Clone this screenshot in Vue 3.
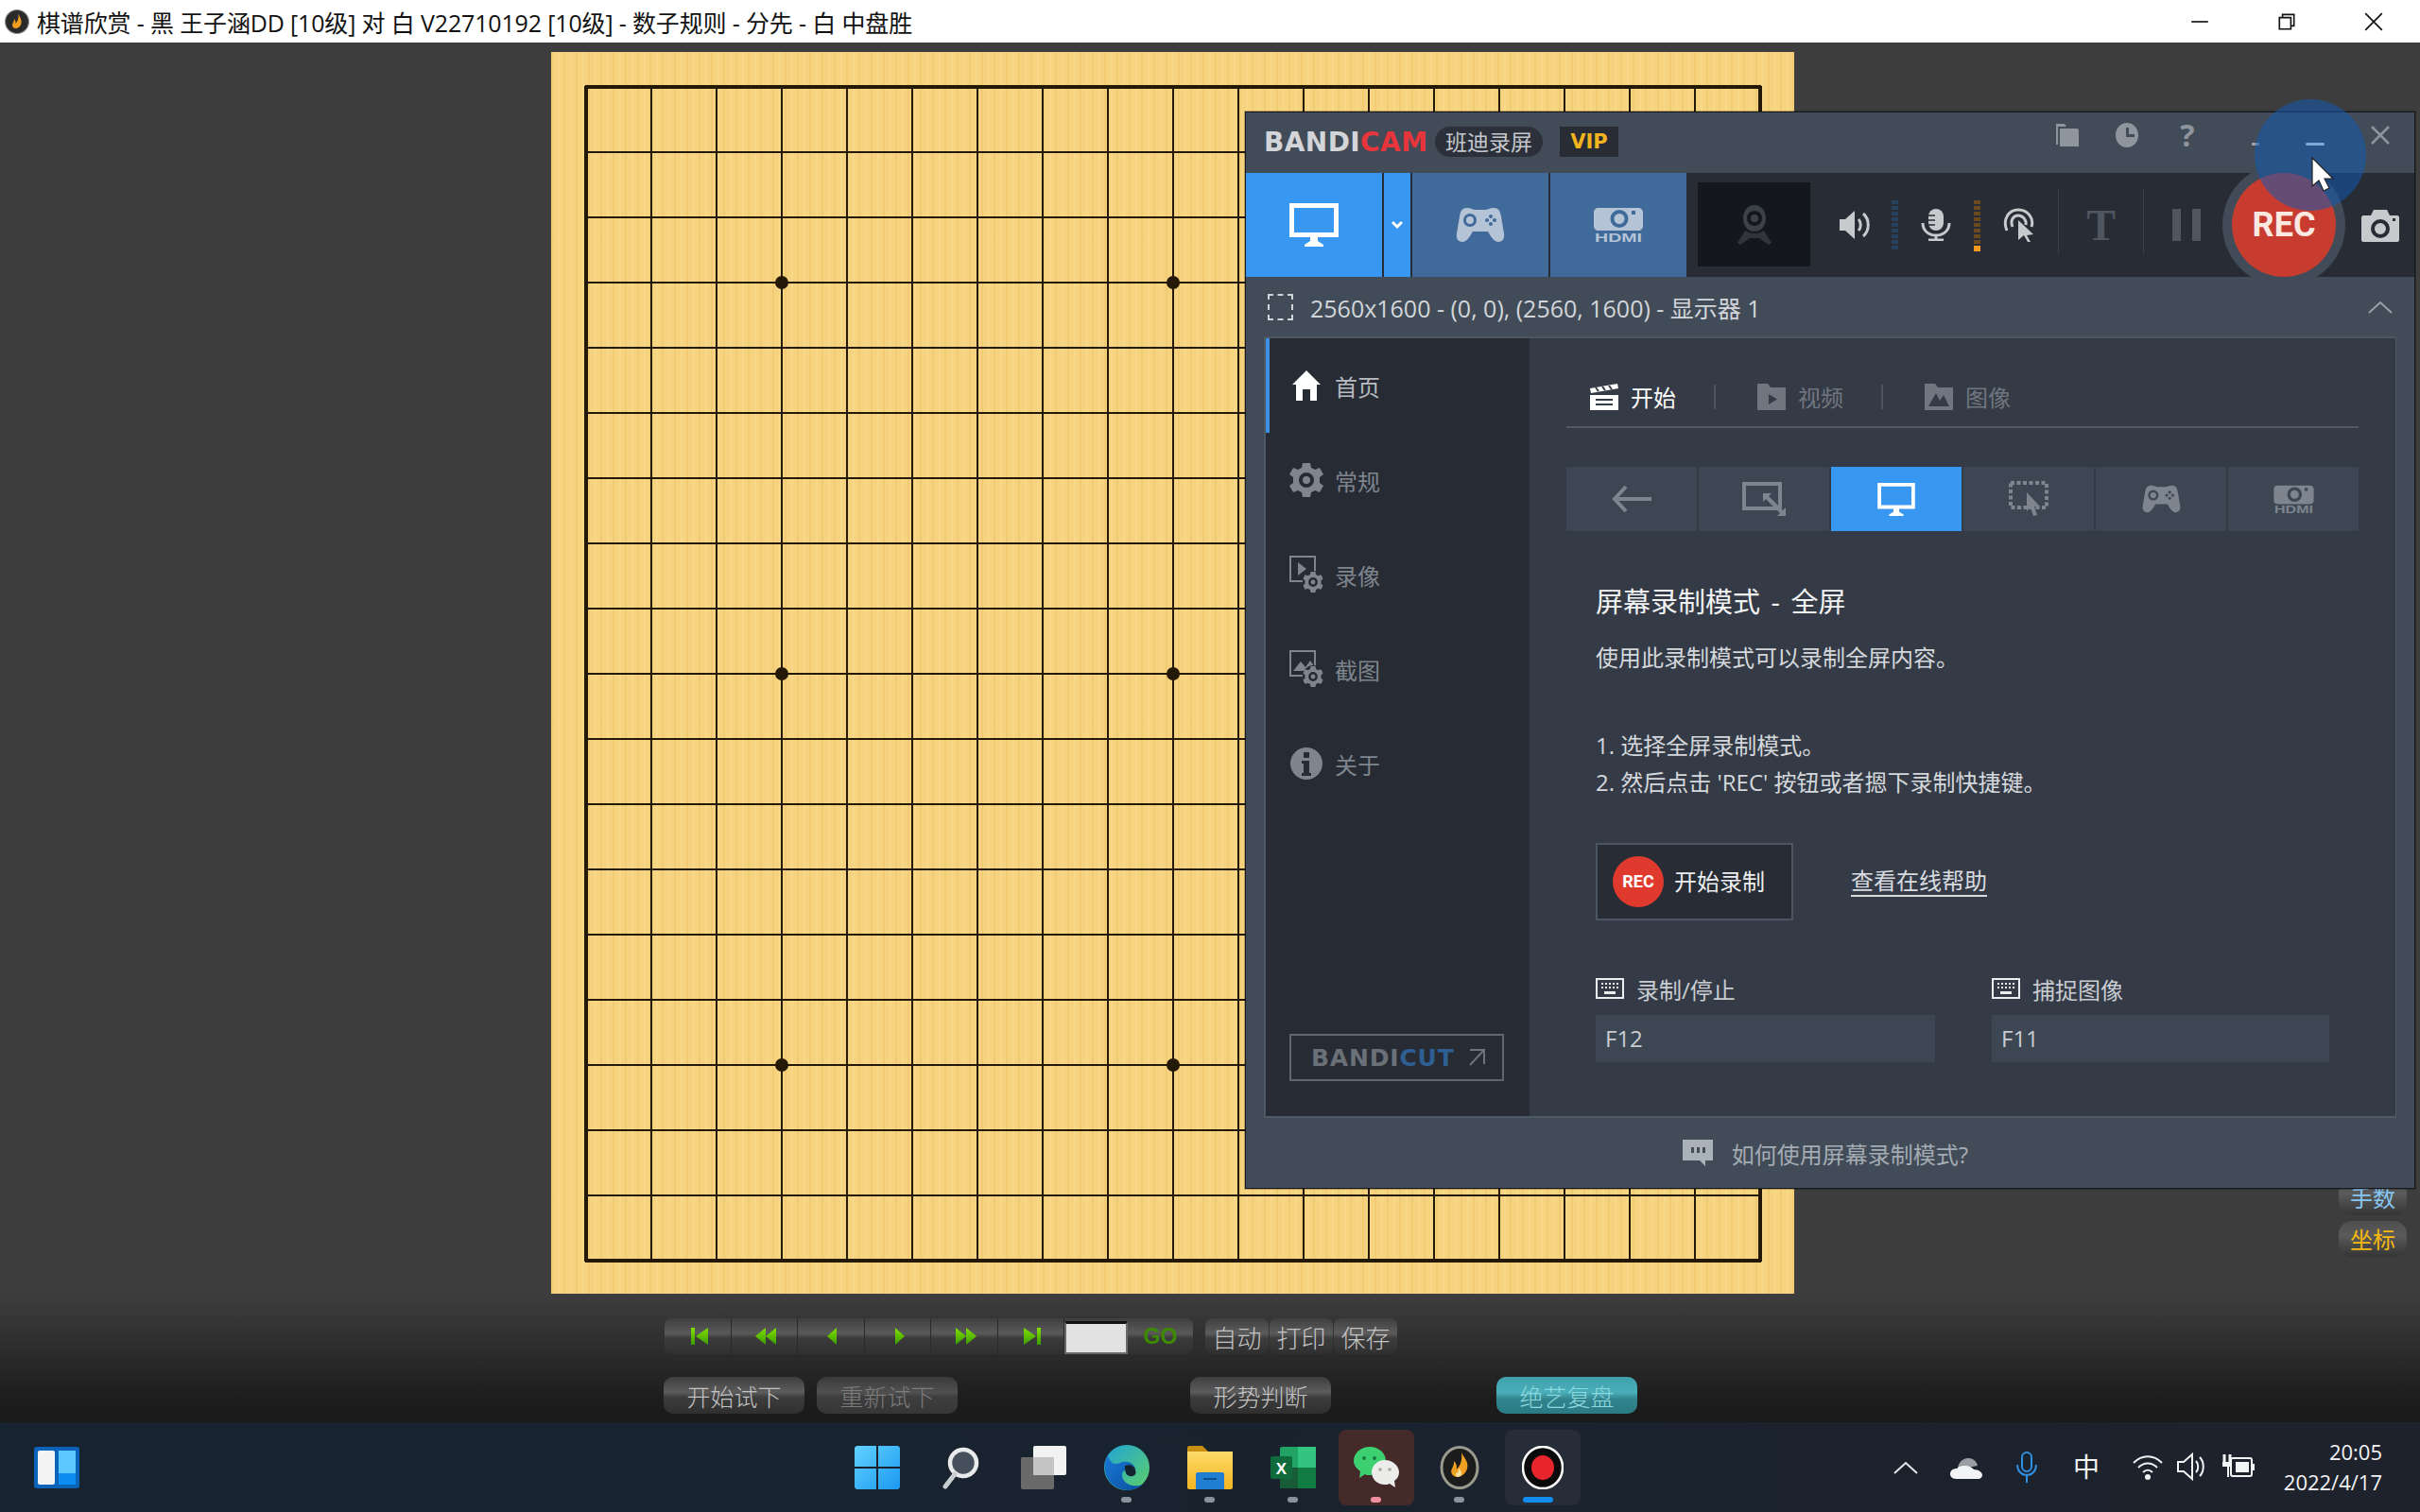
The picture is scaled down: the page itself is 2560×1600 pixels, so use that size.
<template>
  <div class="desktop">
    <!-- shared icons -->
    <svg class="icon-defs" width="0" height="0">
      <symbol id="ic-monitor" viewBox="0 0 52 46">
        <path fill="currentColor" d="M0 0h52v36H30v4l6 4v2H16v-2l6-4v-4H0zM5 5v26h42V5z" fill-rule="evenodd" />
      </symbol>
      <symbol id="ic-game" viewBox="0 0 52 38">
        <path fill="currentColor" fill-rule="evenodd" d="M12 1c4 0 6 2 9 2h10c3 0 5-2 9-2 5 0 7 3 8 9l3 18c1 6-2 9-6 9-3 0-5-2-8-6l-3-5H18l-3 5c-3 4-5 6-8 6-4 0-7-3-6-9l3-18C5 4 7 1 12 1zM15 7a7 7 0 1 0 0 14a7 7 0 1 0 0-14zM15 10a4 4 0 1 1 0 8a4 4 0 1 1 0-8zM37 8a2 2 0 1 0 0 4a2 2 0 1 0 0-4zM37 16a2 2 0 1 0 0 4a2 2 0 1 0 0-4zM33 12a2 2 0 1 0 0 4a2 2 0 1 0 0-4zM41 12a2 2 0 1 0 0 4a2 2 0 1 0 0-4z" />
      </symbol>
      <symbol id="ic-hdmi" viewBox="0 0 52 26">
        <path fill="currentColor" fill-rule="evenodd" d="M5 1h42c3 0 5 2 5 5v14c0 3-2 5-5 5H5c-3 0-5-2-5-5V6c0-3 2-5 5-5zM27 3a9.500 9.500 0 1 0 0 19a9.500 9.500 0 1 0 0-19zM27 7a5.500 5.500 0 1 1 0 11a5.500 5.500 0 1 1 0-11zM40 4h4v4h-4z" />
      </symbol>
      <symbol id="ic-gear" viewBox="0 0 36 36">
        <path fill="currentColor" fill-rule="evenodd" d="M14 0h8l1 5 4 2 5-2 4 7-4 3v6l4 3-4 7-5-2-4 2-1 5h-8l-1-5-4-2-5 2-4-7 4-3v-6L0 12l4-7 5 2 4-2zM18 10a8 8 0 1 0 0 16a8 8 0 1 0 0-16zM18 14a4 4 0 1 1 0 8a4 4 0 1 1 0-8z" />
      </symbol>
      <symbol id="ic-kb" viewBox="0 0 30 22">
        <path fill="currentColor" fill-rule="evenodd" d="M0 0h30v22H0zM2 2v18h26V2zM6 5h2v2H6zM10 5h2v2h-2zM14 5h2v2h-2zM18 5h2v2h-2zM22 5h2v2h-2zM6 9h2v2H6zM10 9h2v2h-2zM14 9h2v2h-2zM18 9h2v2h-2zM22 9h2v2h-2zM9 14h12v3H9z" />
      </symbol>
    </svg>

    <header class="titlebar">
      <svg class="app-icon" viewBox="0 0 24 24">
        <circle cx="12" cy="12" r="11.500" fill="#2a2a2a" stroke="#8f8f8f" />
        <path fill="#f0a020" d="M13 4c2 4 4 6 3 10-1 4-6 6-8 3-2-3 2-5 1-8 2 2 2 4 1 5 3-2 4-6 3-10z" />
      </svg>
      <span class="title-text">棋谱欣赏 - 黑 王子涵DD [10级] 对 白 V22710192 [10级] - 数子规则 - 分先 - 白 中盘胜</span>
      <div class="win-ctrls">
        <svg viewBox="0 0 20 20" class="win-ctrl"><path d="M2 10h16" stroke="#111" stroke-width="1.500" /></svg>
        <svg viewBox="0 0 20 20" class="win-ctrl"><path d="M3 6h11v11H3zM6 6V3h11v11h-3" fill="none" stroke="#111" stroke-width="1.500" /></svg>
        <svg viewBox="0 0 20 20" class="win-ctrl"><path d="M2 2l16 16M18 2L2 18" stroke="#111" stroke-width="1.500" /></svg>
      </div>
    </header>

    <main class="stage">
      <div class="board">
        <svg class="board-grid" width="1315" height="1314" viewBox="0 0 1315 1314">
          <line v-for="n in gridLines" :key="'v' + n" :x1="37 + n * 69" y1="36" :x2="37 + n * 69" y2="1280" stroke="#241806" :stroke-width="n === 0 || n === 18 ? 4 : 2" />
          <line v-for="n in gridLines" :key="'h' + n" x1="36" :y1="37 + n * 69" x2="1280" :y2="37 + n * 69" stroke="#241806" :stroke-width="n === 0 || n === 18 ? 4 : 2" />
          <circle v-for="s in stars" :key="s.key" :cx="37 + s.x * 69" :cy="37 + s.y * 69" r="7" fill="#241806" />
        </svg>
      </div>

      <div class="ctrl-row first">
        <div class="player">
          <button v-for="b in playerBtns" :key="b.key" class="player-btn">
            <svg viewBox="0 0 24 20" width="24" height="20"><path fill="url(#greenFill)" :d="b.d" /></svg>
          </button>
          <div class="move-input"></div>
          <span class="go">GO</span>
          <svg width="0" height="0" class="icon-defs">
            <linearGradient id="greenFill" x1="0" y1="0" x2="0" y2="1">
              <stop offset="0" stop-color="#7fe000" />
              <stop offset="1" stop-color="#3c9c00" />
            </linearGradient>
          </svg>
        </div>
        <div class="small-btns">
          <button class="gloss small">自动</button>
          <button class="gloss small">打印</button>
          <button class="gloss small">保存</button>
        </div>
      </div>
      <div class="ctrl-row second">
        <button class="gloss wide">开始试下</button>
        <button class="gloss wide off">重新试下</button>
        <button class="gloss wide judge">形势判断</button>
        <button class="gloss wide teal">绝艺复盘</button>
      </div>

      <div class="side-tags">
        <span class="side-tag blue">手数</span>
        <span class="side-tag gold">坐标</span>
      </div>
    </main>

    <footer class="taskbar">
      <svg class="widgets" viewBox="0 0 48 44">
        <rect width="48" height="44" rx="3" fill="#0a63b8" />
        <rect x="4" y="4" width="18" height="36" rx="2" fill="#f4f4f4" />
        <rect x="26" y="4" width="18" height="24" fill="#5cc8ff" />
        <rect x="26" y="28" width="18" height="12" fill="#0d8df0" />
      </svg>
      <div class="task-icons">
        <div class="task-cell">
          <svg viewBox="0 0 48 46" width="48" height="46">
            <defs><linearGradient id="winFill" x1="0" y1="0" x2="1" y2="1"><stop offset="0" stop-color="#62d2ff" /><stop offset="1" stop-color="#1a98f0" /></linearGradient></defs>
            <path fill="url(#winFill)" d="M2 0h21v22H0V2zM25 0h21l2 2v20H25zM0 24h23v22H2l-2-2zM25 24h23v20l-2 2H25z" />
          </svg>
        </div>
        <div class="task-cell">
          <svg viewBox="0 0 40 46" width="40" height="46">
            <circle cx="23" cy="18" r="14" fill="#46505c" stroke="#e8eaec" stroke-width="4.500" />
            <path d="M14 30L4 43" stroke="#c8cdd2" stroke-width="5" stroke-linecap="round" />
          </svg>
        </div>
        <div class="task-cell">
          <svg viewBox="0 0 48 46" width="48" height="46">
            <rect x="13" width="35" height="31" rx="2" fill="#f2f2f2" />
            <rect y="12" width="35" height="34" rx="2" fill="#6a6a6a" />
            <rect x="13" y="12" width="22" height="19" fill="#c4c4c4" />
          </svg>
        </div>
        <div class="task-cell">
          <svg viewBox="0 0 48 48" width="48" height="48">
            <defs>
              <linearGradient id="edgeTop" x1="0" y1="0" x2="1" y2="1"><stop offset="0" stop-color="#1fa3d8" /><stop offset="1" stop-color="#5fd068" /></linearGradient>
              <linearGradient id="edgeBot" x1="0" y1="0" x2="1" y2="1"><stop offset="0" stop-color="#1a78d8" /><stop offset="1" stop-color="#0a4f9e" /></linearGradient>
            </defs>
            <circle cx="24" cy="24" r="24" fill="url(#edgeTop)" />
            <path fill="url(#edgeBot)" d="M4 11C-4 26 3 46 24 48c6 0 12-2 17-6-12 4-22-2-22-10 0-6 7-8 14-5 0-8-10-11-16-8-6 2-10 2-13-8z" />
            <path fill="#14222f" d="M22 22c6-2 11 1 11 5 2 4-2 7-6 6-4-1-5-4-5-11z" />
          </svg>
        </div>
        <div class="task-cell">
          <svg viewBox="0 0 48 46" width="48" height="46">
            <defs><linearGradient id="folderFill" x1="0" y1="0" x2="0" y2="1"><stop offset="0" stop-color="#ffdb6a" /><stop offset="1" stop-color="#f2b420" /></linearGradient></defs>
            <path fill="#c98f10" d="M0 2c0-1 1-2 2-2h14l6 6h-22z" />
            <path fill="url(#folderFill)" d="M0 6h48v38c0 1-1 2-2 2H2c-1 0-2-1-2-2z" />
            <path fill="#1f7ed0" d="M9 46V30c0-1 1-2 2-2h26c1 0 2 1 2 2v16z" />
            <rect x="17" y="34" width="14" height="2" fill="#0c4f90" />
          </svg>
        </div>
        <div class="task-cell">
          <svg viewBox="0 0 48 44" width="48" height="44">
            <path fill="#21a366" d="M12 0h34c1 0 2 1 2 2v40c0 1-1 2-2 2H12c-1 0-2-1-2-2V2c0-1 1-2 2-2z" />
            <rect x="29" width="19" height="22" fill="#33c481" />
            <rect x="10" y="22" width="19" height="22" fill="#185c37" />
            <rect x="29" y="22" width="19" height="22" fill="#107c41" />
            <rect y="10" width="23" height="24" rx="2" fill="#0f6b3c" />
            <text x="11.500" y="28.500" text-anchor="middle" class="xl-label">X</text>
          </svg>
        </div>
        <div class="task-cell wechat">
          <svg viewBox="0 0 48 44" width="48" height="44">
            <path fill="#3dd070" d="M17 0c10 0 17 7 17 15s-7 15-17 15c-2 0-4 0-5-1l-6 4 1-7C3 23 0 19 0 15 0 7 7 0 17 0z" />
            <circle cx="11" cy="12" r="2" fill="#1c7a40" /><circle cx="22" cy="12" r="2" fill="#1c7a40" />
            <path fill="#ecedea" d="M33 14c8 0 15 6 15 13 0 4-2 7-5 9l1 7-6-4c-2 1-3 1-5 1-8 0-14-6-14-13s6-13 14-13z" />
            <circle cx="28" cy="24" r="1.800" fill="#a8a8a8" /><circle cx="38" cy="24" r="1.800" fill="#a8a8a8" />
          </svg>
        </div>
        <div class="task-cell">
          <svg viewBox="0 0 42 46" width="42" height="46">
            <ellipse cx="21" cy="23" rx="19" ry="21.500" fill="#1c1c1c" stroke="#9a9a8e" stroke-width="3" />
            <path fill="#f0a020" d="M23 7c3 6 8 10 6 17-2 8-12 12-16 6-3-5 3-8 2-14 3 3 4 7 2 9 5-3 7-10 6-18z" />
            <path fill="#f6e0a0" d="M20 24c3 2 4 5 2 8-3 2-6 0-5-3 2 0 3-2 3-5z" />
          </svg>
        </div>
        <div class="task-cell rec-task">
          <svg viewBox="0 0 44 46" width="44" height="46">
            <ellipse cx="22" cy="23" rx="21" ry="22" fill="#0a0a0a" stroke="#fff" stroke-width="2.500" />
            <ellipse cx="22" cy="23" rx="12" ry="13" fill="#e8242c" />
          </svg>
        </div>
        <i class="dot d-edge"></i>
        <i class="dot d-folder"></i>
        <i class="dot d-excel"></i>
        <i class="dot d-wechat"></i>
        <i class="dot d-flame"></i>
        <i class="dot d-rec"></i>
      </div>
      <div class="tray">
        <svg viewBox="0 0 28 16" width="28" height="16" class="tray-chev"><path d="M2 14L14 3l12 11" fill="none" stroke="#e6e8ea" stroke-width="2" /></svg>
        <svg viewBox="0 0 34 24" width="34" height="24" class="tray-cloud">
          <path fill="#9a9ea3" d="M8 14c0-7 5-12 11-12 5 0 9 3 10 8z" />
          <path fill="#f2f3f4" d="M6 24c-4 0-6-3-6-5 0-4 3-6 7-6 3-3 6-3 9-3 4 0 7 2 9 4 5 0 9 3 9 6 0 2-2 4-4 4z" />
        </svg>
        <svg viewBox="0 0 24 34" width="24" height="34" class="tray-mic">
          <rect x="7" y="1" width="10" height="20" rx="5" fill="none" stroke="#2f8fe0" stroke-width="2" />
          <path d="M2 14c0 6 4 11 10 11s10-5 10-11M12 25v8" fill="none" stroke="#2f8fe0" stroke-width="2" />
        </svg>
        <span class="tray-ime">中</span>
        <svg viewBox="0 0 34 28" width="34" height="28" class="tray-wifi">
          <path d="M2 10c9-9 21-9 30 0M7 15c6-6 14-6 20 0M12 20c3-3 7-3 10 0" fill="none" stroke="#f2f3f4" stroke-width="2" />
          <circle cx="17" cy="25" r="3" fill="#f2f3f4" />
        </svg>
        <svg viewBox="0 0 32 30" width="32" height="30" class="tray-vol">
          <path d="M1 10h6l9-8v26l-9-8H1z" fill="none" stroke="#f2f3f4" stroke-width="2" />
          <path d="M20 9c3 3 3 9 0 12M24 5c5 5 5 15 0 20" fill="none" stroke="#f2f3f4" stroke-width="2" />
        </svg>
        <svg viewBox="0 0 34 26" width="34" height="26" class="tray-bat">
          <path d="M2 0v8M8 0v8" stroke="#f2f3f4" stroke-width="3" />
          <path d="M0 8h10v5H7v11H5V13H0z" fill="#f2f3f4" />
          <rect x="9" y="4" width="22" height="19" rx="2" fill="none" stroke="#f2f3f4" stroke-width="2" />
          <rect x="14" y="8" width="14" height="11" fill="#f2f3f4" />
          <rect x="31" y="10" width="3" height="7" fill="#f2f3f4" />
        </svg>
        <div class="clock">
          <span>20:05</span>
          <span>2022/4/17</span>
        </div>
      </div>
    </footer>

    <!-- Bandicam window floats over the board -->
    <section class="bc-window">
      <div class="bc-title">
        <span class="bc-logo">BANDI<em>CAM</em></span>
        <span class="bc-badge">班迪录屏</span>
        <span class="bc-vip">VIP</span>
        <div class="bc-tools">
          <span class="bc-tool narrow">
            <svg viewBox="0 0 26 28" width="26" height="28"><path fill="currentColor" d="M2 2h9l2 3h-9v19H2zM6 7h18c1 0 2 1 2 2v17H6z" /></svg>
          </span>
          <span class="bc-tool narrow">
            <svg viewBox="0 0 24 28" width="24" height="28"><path fill="currentColor" fill-rule="evenodd" d="M12 1c7 0 12 6 12 13s-5 13-12 13S0 21 0 14 5 1 12 1zM11 6v10h9v-3h-6V6z" /></svg>
          </span>
          <span class="bc-tool narrow bc-q">?</span>
          <span class="bc-tool"><i class="bc-dash"></i></span>
          <span class="bc-tool"><i class="bc-dash wide"></i></span>
          <span class="bc-tool">
            <svg viewBox="0 0 22 22" width="22" height="22"><path d="M2 2l18 18M20 2L2 20" stroke="currentColor" stroke-width="2.500" /></svg>
          </span>
        </div>
      </div>

      <div class="bc-toolbar">
        <button class="mode-btn on"><svg width="52" height="46" class="i-white"><use href="#ic-monitor" /></svg></button>
        <button class="mode-btn on drop">
          <svg viewBox="0 0 12 9" width="12" height="9"><path d="M1 1l5 5 5-5" fill="none" stroke="#fff" stroke-width="3" /></svg>
        </button>
        <button class="mode-btn"><svg width="52" height="38"><use href="#ic-game" /></svg></button>
        <button class="mode-btn">
          <svg class="hdmi-svg" viewBox="0 0 52 44" width="52" height="44">
            <use href="#ic-hdmi" width="52" height="26" />
            <text x="26" y="37" text-anchor="middle" class="hdmi-label" textLength="50" lengthAdjust="spacingAndGlyphs">HDMI</text>
          </svg>
        </button>
        <div class="webcam">
          <svg viewBox="0 0 36 42" width="36" height="42">
            <path fill="#3c4047" fill-rule="evenodd" d="M18 0c7 0 12 6 12 14s-5 14-12 14S6 22 6 14 11 0 18 0zM18 6a8 8 0 1 0 0 16a8 8 0 1 0 0-16zM18 10a4 4 0 1 1 0 8a4 4 0 1 1 0-8z" />
            <path fill="#31353b" d="M8 27c6 4 14 4 20 0l8 13-3 2-10-7H13L3 42l-3-2z" />
          </svg>
        </div>
        <span class="tool-cell spk">
          <svg viewBox="0 0 36 34" width="36" height="34">
            <path fill="currentColor" d="M0 11h6l10-9v30l-10-9H0z" />
            <path d="M20 11c3 3 3 9 0 12M25 5c7 6 7 18 0 24" fill="none" stroke="currentColor" stroke-width="3" />
          </svg>
        </span>
        <i class="meter blue"></i>
        <span class="tool-cell mic">
          <svg viewBox="0 0 32 34" width="32" height="34">
            <rect x="8" y="0" width="16" height="23" rx="8" fill="currentColor" />
            <path d="M8 7h7M8 12h7M8 17h7" stroke="#272c35" stroke-width="1.500" />
            <path d="M2 15c0 8 6 13 14 13s14-5 14-13M16 28v4M8 33h16" fill="none" stroke="currentColor" stroke-width="3" />
          </svg>
        </span>
        <i class="meter orange"></i>
        <span class="tool-cell click">
          <svg viewBox="0 0 34 36" width="34" height="36">
            <path d="M4 24C-1 12 6 2 16 2s17 9 14 18" fill="none" stroke="currentColor" stroke-width="3" />
            <path d="M10 20C7 13 11 8 16 8s9 5 8 10" fill="none" stroke="currentColor" stroke-width="3" />
            <path fill="currentColor" d="M16 13l16 15-7 1 4 7-3 0-4-7-6 5z" />
          </svg>
        </span>
        <i class="tool-sep"></i>
        <span class="tool-cell dim bc-t">T</span>
        <i class="tool-sep"></i>
        <span class="tool-cell dim">
          <svg viewBox="0 0 30 34" width="30" height="34"><path fill="currentColor" d="M0 0h9v34H0zM21 0h9v34h-9z" /></svg>
        </span>
        <span class="tool-cell cam">
          <svg viewBox="0 0 40 34" width="40" height="34">
            <path fill="currentColor" fill-rule="evenodd" d="M2 6h8l3-6h14l3 6h8c1 0 2 1 2 2v24c0 1-1 2-2 2H2c-1 0-2-1-2-2V8c0-1 1-2 2-2zM20 10a10 10 0 1 0 0 20a10 10 0 1 0 0-20zM20 14a6 6 0 1 1 0 12a6 6 0 1 1 0-12zM33 9h3v3h-3z" />
          </svg>
        </span>
        <div class="rec-ring"><span class="rec-big">REC</span></div>
      </div>

      <div class="bc-screen">
        <i class="dashed"></i>
        <span class="screen-text">2560x1600 - (0, 0), (2560, 1600) - 显示器 1</span>
        <svg class="chev" viewBox="0 0 26 14" width="26" height="14"><path d="M1 13L13 2l12 11" fill="none" stroke="#9aa1a9" stroke-width="2" /></svg>
      </div>

      <div class="bc-panel">
        <nav class="sidebar">
          <div class="nav-item active">
            <svg viewBox="0 0 36 36" width="36" height="36"><path fill="currentColor" d="M18 2l15 15h-4v17h-7V22h-8v12H7V17H3z" /></svg>
            <span>首页</span>
          </div>
          <div class="nav-item">
            <svg width="36" height="36"><use href="#ic-gear" /></svg>
            <span>常规</span>
          </div>
          <div class="nav-item">
            <span class="nav-combo">
              <svg viewBox="0 0 28 28" width="28" height="28"><path fill="none" stroke="currentColor" stroke-width="2" d="M1 1h26v26H1z" /><path fill="currentColor" d="M9 7l9 7-9 7z" /></svg>
              <svg class="combo-gear" width="22" height="24"><use href="#ic-gear" /></svg>
            </span>
            <span>录像</span>
          </div>
          <div class="nav-item">
            <span class="nav-combo">
              <svg viewBox="0 0 28 28" width="28" height="28"><path fill="none" stroke="currentColor" stroke-width="2" d="M1 1h26v26H1z" /><path fill="currentColor" d="M4 22l8-10 5 6 5-7 3 4v7z" /></svg>
              <svg class="combo-gear" width="22" height="24"><use href="#ic-gear" /></svg>
            </span>
            <span>截图</span>
          </div>
          <div class="nav-item">
            <svg viewBox="0 0 36 36" width="36" height="36"><path fill="currentColor" fill-rule="evenodd" d="M18 1a17 17 0 1 1 0 34a17 17 0 1 1 0-34zM15 6v6h6V6zM13 15v3h2v10h-2v3h10v-3h-2V15z" /></svg>
            <span>关于</span>
          </div>
          <div class="bandicut">
            <span class="cut-logo">BANDI<em>CUT</em></span>
            <svg viewBox="0 0 20 20" width="20" height="20"><path d="M3 2h15v15M18 2L3 18" fill="none" stroke="#6d737b" stroke-width="2" /></svg>
          </div>
        </nav>

        <div class="content">
          <div class="tabs">
            <div class="tab active">
              <svg viewBox="0 0 30 28" width="30" height="28"><path fill="currentColor" d="M0 5l29-5 1 5L1 10zM0 12h30v16H0z" /><path d="M6 17h18M6 22h18" stroke="#343b46" stroke-width="2" /><path d="M6 4l3 4M13 3l3 4M20 2l3 4" stroke="#343b46" stroke-width="2" /></svg>
              <span>开始</span>
            </div>
            <i class="tab-sep"></i>
            <div class="tab">
              <svg viewBox="0 0 30 28" width="30" height="28"><path fill="currentColor" fill-rule="evenodd" d="M0 0h11l3 4h16v24H0zM12 11v11l9-5.500z" /></svg>
              <span>视频</span>
            </div>
            <i class="tab-sep"></i>
            <div class="tab">
              <svg viewBox="0 0 30 28" width="30" height="28"><path fill="currentColor" fill-rule="evenodd" d="M0 0h11l3 4h16v24H0zM4 24h22l-6-12-4 6-4-8z" /></svg>
              <span>图像</span>
            </div>
          </div>

          <div class="modes">
            <div class="mode-cell">
              <svg viewBox="0 0 42 30" width="42" height="30"><path d="M15 2L3 15l12 13M3 15h39" fill="none" stroke="currentColor" stroke-width="4" /></svg>
            </div>
            <div class="mode-cell">
              <svg viewBox="0 0 46 36" width="46" height="36"><path fill="none" stroke="currentColor" stroke-width="4" d="M2 2h38v26H2z" /><path fill="currentColor" d="M22 12h9l-3 3 15 15 3-3v9h-9l3-3-15-15-3 3z" /></svg>
            </div>
            <div class="mode-cell on">
              <svg width="40" height="35" class="i-white"><use href="#ic-monitor" /></svg>
            </div>
            <div class="mode-cell">
              <svg viewBox="0 0 42 38" width="42" height="38"><rect x="2" y="2" width="38" height="26" fill="none" stroke="currentColor" stroke-width="4" stroke-dasharray="4 2.500" /><path fill="currentColor" d="M19 12l14 15-6 0 3 9-4 1-3-9-4 4z" /></svg>
            </div>
            <div class="mode-cell"><svg width="45" height="30"><use href="#ic-game" /></svg></div>
            <div class="mode-cell">
              <svg class="hdmi-svg" viewBox="0 0 52 44" width="43" height="36">
                <use href="#ic-hdmi" width="52" height="26" />
                <text x="26" y="37" text-anchor="middle" class="hdmi-label" textLength="50" lengthAdjust="spacingAndGlyphs">HDMI</text>
              </svg>
            </div>
          </div>

          <div class="guide">
            <h2>屏幕录制模式 - 全屏</h2>
            <p class="lead">使用此录制模式可以录制全屏内容。</p>
            <ol class="steps">
              <li>1. 选择全屏录制模式。</li>
              <li>2. 然后点击 'REC' 按钮或者摁下录制快捷键。</li>
            </ol>
            <div class="actions">
              <button class="rec-start"><span class="rec-small">REC</span><span class="rec-label">开始录制</span></button>
              <a class="help-link">查看在线帮助</a>
            </div>
            <div class="hotkeys">
              <div class="hotkey">
                <label><svg width="30" height="22"><use href="#ic-kb" /></svg>录制/停止</label>
                <div class="key-input first-key">F12</div>
              </div>
              <div class="hotkey">
                <label><svg width="30" height="22"><use href="#ic-kb" /></svg>捕捉图像</label>
                <div class="key-input second-key">F11</div>
              </div>
            </div>
          </div>
        </div>
      </div>

      <div class="bc-foot">
        <svg viewBox="0 0 32 28" width="32" height="28"><path fill="#aab1b8" fill-rule="evenodd" d="M0 0h32v22H24v6l-6-6H0zM9 8v6h3V8zM15 8v6h3V8zM21 8v6h3V8z" /></svg>
        <span>如何使用屏幕录制模式?</span>
      </div>

      <div class="hover-spot"></div>
      <svg class="cursor" viewBox="0 0 26 38" width="26" height="38">
        <path d="M1 1v30l7-6 5 11 6-3-5-10h9z" fill="#fff" stroke="#222" stroke-width="1.200" />
      </svg>
    </section>
  </div>
</template>

<script setup>
const gridLines = Array.from({ length: 19 }, (_, i) => i)

const stars = []
for (const x of [3, 9, 15]) {
  for (const y of [3, 9, 15]) {
    stars.push({ key: x + '-' + y, x, y })
  }
}

const playerBtns = [
  { key: 'first', d: 'M3 1h4v18H3zM21 1v18L8 10z' },
  { key: 'prev10', d: 'M12 1v18L1 10zM23 1v18L12 10z' },
  { key: 'prev', d: 'M16 1v18L6 10z' },
  { key: 'next', d: 'M8 1v18l10-9z' },
  { key: 'next10', d: 'M1 1v18l11-9zM12 1v18l11-9z' },
  { key: 'last', d: 'M3 1v18l13-9zM17 1h4v18h-4z' }
]
</script>

<style>
html,
body {
  margin: 0;
  background: #1a1a1a;
}
</style>

<style scoped>
* {
  box-sizing: border-box;
}

.icon-defs {
  position: absolute;
}

.desktop {
  position: relative;
  width: 2560px;
  height: 1600px;
  display: flex;
  flex-direction: column;
  overflow: hidden;
  font-family: "Open Sans", "Noto Sans CJK SC", sans-serif;
}

.titlebar {
  height: 45px;
  display: flex;
  align-items: center;
  padding-left: 5px;
  background: #fff;
  color: #111;
  font-size: 25px;
}

.title-text {
  letter-spacing: -0.15px;
}

.app-icon {
  width: 26px;
  height: 26px;
  margin-right: 8px;
}

.win-ctrls {
  margin-left: auto;
  margin-right: 38px;
  display: flex;
  gap: 70px;
}

.win-ctrl {
  width: 22px;
  height: 22px;
}

.stage {
  position: relative;
  flex: 1;
  background: linear-gradient(#3d3d3d 0, #3d3d3d 1325px, #1c1c1c 1440px, #1a1a1a 100%);
  padding-top: 10px;
}

.board {
  width: 1315px;
  height: 1314px;
  margin-left: 583px;
  background-color: #f6d37f;
  background-image: repeating-linear-gradient(90deg, rgba(214, 150, 50, 0.14) 0, rgba(214, 150, 50, 0.14) 2px, transparent 2px, transparent 7px, rgba(255, 236, 170, 0.22) 7px, rgba(255, 236, 170, 0.22) 9px, transparent 9px, transparent 13px);
}

.board-grid {
  display: block;
}

.ctrl-row {
  display: flex;
}

.ctrl-row.first {
  margin-top: 26px;
  margin-left: 703px;
  gap: 13px;
}

.ctrl-row.second {
  margin-top: 24px;
  margin-left: 702px;
  gap: 13px;
}

.player {
  width: 559px;
  height: 38px;
  display: flex;
  border-radius: 8px;
  overflow: hidden;
  background: linear-gradient(#3f3f3f, #5a5a5a 42%, #3b3b3b 55%, #303030);
}

.player-btn {
  width: 70.500px;
  padding: 0 0 0 4px;
  border: 0;
  border-right: 1px solid #2a2a2a;
  background: none;
  display: flex;
  align-items: center;
  justify-content: center;
}

.move-input {
  width: 67px;
  height: 35px;
  margin-top: 3px;
  background: #e2e2e2;
  border: 2px solid #6a6a6a;
  border-top: 3px solid #111;
}

.go {
  flex: 1;
  text-align: center;
  line-height: 38px;
  font-size: 23px;
  font-weight: 700;
  color: #3d8a00;
  font-family: "Liberation Sans", sans-serif;
}

.small-btns {
  display: flex;
  gap: 1px;
}

.gloss {
  padding: 0;
  border: 0;
  font-family: "Noto Sans CJK SC", sans-serif;
  font-weight: 300;
  color: #c4c4c4;
  background: linear-gradient(#3f3f3f, #5c5c5c 42%, #3d3d3d 55%, #2f2f2f);
}

.small {
  width: 67px;
  height: 38px;
  font-size: 26px;
  border-radius: 8px;
}

.wide {
  width: 149px;
  height: 39px;
  font-size: 25px;
  border-radius: 10px;
}

.off {
  color: #7d7d7d;
  background: linear-gradient(#3a3a3a, #505050 42%, #3e3e3e 55%, #363636);
}

.judge {
  margin-left: 233px;
}

.teal {
  margin-left: 162px;
  color: #8ed9e0;
  background: linear-gradient(#3fa0aa, #4aafb9 42%, #32858e 60%, #2a7a83);
}

.side-tags {
  position: absolute;
  left: 2474px;
  top: 1203px;
  width: 72px;
  display: flex;
  flex-direction: column;
  gap: 6px;
}

.side-tag {
  height: 38px;
  border-radius: 14px;
  background: linear-gradient(#4e4e4e, #5a5a5a 40%, #353535);
  text-align: center;
  font-size: 24px;
  line-height: 38px;
  font-family: "Noto Sans CJK SC", sans-serif;
}

.side-tag.blue {
  color: #86c6f2;
}

.side-tag.gold {
  color: #f5b90f;
}

.taskbar {
  height: 95px;
  display: flex;
  align-items: center;
  background: linear-gradient(90deg, #17232f, #18232f 45%, #1e222c);
  color: #f2f3f4;
}

.widgets {
  width: 48px;
  height: 44px;
  margin-left: 36px;
}

.task-icons {
  position: relative;
  display: flex;
  margin-left: 800px;
  height: 95px;
  align-items: center;
}

.task-cell {
  width: 80px;
  height: 80px;
  margin: 0 4px;
  display: flex;
  align-items: center;
  justify-content: center;
  border-radius: 8px;
}

.wechat {
  background: #452a2a;
}

.rec-task {
  background: #272d38;
}

.dot {
  position: absolute;
  top: 79px;
  width: 11px;
  height: 6px;
  border-radius: 3px;
  background: #8c929a;
}

.d-edge {
  left: 302px;
}

.d-folder {
  left: 390px;
}

.d-excel {
  left: 478px;
}

.d-wechat {
  left: 566px;
  background: #f08fa0;
}

.d-flame {
  left: 654px;
}

.d-rec {
  left: 727px;
  width: 32px;
  background: #0f8cf0;
}

.tray {
  flex: 1;
  position: relative;
  height: 95px;
}

.tray > svg,
.tray-ime {
  position: absolute;
}

.tray-chev {
  left: 326px;
  top: 40px;
}

.tray-cloud {
  left: 387px;
  top: 36px;
}

.tray-mic {
  left: 456px;
  top: 31px;
}

.tray-ime {
  left: 517px;
  top: 26px;
  font-size: 28px;
  line-height: 40px;
  font-family: "Noto Sans CJK SC", sans-serif;
}

.tray-wifi {
  left: 579px;
  top: 33px;
}

.tray-vol {
  left: 627px;
  top: 32px;
}

.tray-bat {
  left: 675px;
  top: 34px;
}

.clock {
  position: absolute;
  right: 40px;
  top: 15px;
  display: flex;
  flex-direction: column;
  align-items: flex-end;
  font-size: 22px;
  line-height: 32px;
}

/* bandicam window */
.bc-window {
  position: absolute;
  left: 1317px;
  top: 118px;
  width: 1238px;
  height: 1140px;
  display: flex;
  flex-direction: column;
  background: #424c59;
  border: 1px solid #15191e;
  box-shadow: 0 0 0 1px rgba(0, 0, 0, 0.25);
}

.bc-title {
  height: 64px;
  display: flex;
  align-items: center;
  padding-left: 19px;
  color: #8e959d;
}

.bc-logo {
  width: 173px;
  font-family: "DejaVu Sans", sans-serif;
  font-size: 28px;
  font-weight: 700;
  color: #d3d5d8;
  white-space: nowrap;
  letter-spacing: 0.4px;
  margin-top: -2px;
}

.bc-logo em {
  font-style: normal;
  color: #e8353c;
}

.bc-badge {
  margin-left: 8px;
  width: 114px;
  height: 32px;
  border-radius: 16px;
  background: #2b303a;
  color: #c4c7cc;
  font-size: 23px;
  line-height: 32px;
  text-align: center;
  margin-top: -2px;
}

.bc-vip {
  margin-left: 18px;
  width: 62px;
  height: 32px;
  background: #272c35;
  text-align: center;
  font-family: "DejaVu Sans", sans-serif;
  font-weight: 700;
  font-size: 21px;
  line-height: 32px;
  color: #f2b41e;
  margin-top: -2px;
}

.bc-tools {
  margin-left: auto;
  display: flex;
  padding-right: 3px;
  margin-top: -16px;
}

.bc-tool {
  width: 66px;
  display: flex;
  align-items: center;
  justify-content: center;
}

.bc-tool.narrow {
  width: 64px;
}

.bc-q {
  font-size: 32px;
  font-weight: 700;
  line-height: 34px;
  margin-right: 7px;
}

.bc-dash {
  width: 8px;
  height: 3px;
  background: #9aa1a9;
  margin-top: 18px;
}

.bc-dash.wide {
  width: 20px;
  margin-right: 6px;
  background: #7fa9d8;
  position: relative;
  z-index: 3;
}

.bc-toolbar {
  position: relative;
  height: 110px;
  display: flex;
  align-items: stretch;
  background: #272c35;
  color: #c7cacd;
}

.mode-btn {
  width: 144px;
  margin-right: 2px;
  padding: 0;
  border: 0;
  background: #3f6a99;
  color: #b4c4d6;
  display: flex;
  align-items: center;
  justify-content: center;
}

.mode-btn.on {
  background: #3897f0;
}

.mode-btn.drop {
  width: 28px;
}

.mode-btn:nth-of-type(4) {
  margin-right: 0;
}

.hdmi-svg {
  margin-top: 5px;
}

.i-white {
  color: #fff;
}

.webcam {
  width: 119px;
  height: 89px;
  margin: 10px 11px 0 12px;
  background: #14181d;
  display: flex;
  align-items: center;
  justify-content: center;
}

.tool-cell {
  display: flex;
  align-items: center;
  justify-content: center;
}

.spk {
  width: 75px;
}

.mic {
  width: 80px;
}

.click {
  width: 82px;
}

.dim {
  width: 89px;
  color: #50565f;
}

.bc-t {
  font-family: "Liberation Serif", serif;
  font-size: 46px;
  font-weight: 700;
}

.cam {
  position: absolute;
  right: 16px;
  top: 39px;
}

.meter {
  width: 7px;
  height: 54px;
  margin-top: 29px;
  background: repeating-linear-gradient(#27415c 0, #27415c 4px, transparent 4px, transparent 6px);
}

.meter.orange {
  background: linear-gradient(transparent 48px, #f59a1f 48px),
    repeating-linear-gradient(#6a4a20 0, #6a4a20 4px, transparent 4px, transparent 6px);
}

.tool-sep {
  width: 1px;
  height: 70px;
  margin-top: 16px;
  background: #3a404a;
}

.rec-ring {
  position: absolute;
  left: 1033px;
  top: -10px;
  width: 130px;
  height: 130px;
  border-radius: 50%;
  background: #424c59;
  display: flex;
  align-items: center;
  justify-content: center;
}

.rec-big {
  width: 110px;
  height: 110px;
  border-radius: 50%;
  background: #c83c30;
  color: #fbe8e0;
  font-family: "Roboto", "Liberation Sans", sans-serif;
  font-weight: 700;
  font-size: 36px;
  line-height: 110px;
  text-align: center;
}

.bc-screen {
  height: 63px;
  display: flex;
  align-items: center;
  padding: 0 22px 0 23px;
  color: #d2d6da;
  font-size: 24px;
}

.screen-text {
  font-size: 25px;
}

.dashed {
  width: 27px;
  height: 28px;
  margin-right: 18px;
  border: 2px dashed #d2d6da;
}

.chev {
  margin-left: auto;
  margin-right: 1px;
}

.bc-panel {
  height: 827px;
  margin: 0 19px 0 19px;
  display: flex;
  border: 2px solid #505a67;
  border-right-width: 1px;
  border-left: 0;
  border-top-color: #4d5764;
}

.sidebar {
  width: 281px;
  flex-shrink: 0;
  display: flex;
  flex-direction: column;
  background: #262b34;
  border-left: 2px solid #4d5764;
  color: #7f858d;
}

.nav-item {
  height: 100px;
  display: flex;
  align-items: center;
  gap: 12px;
  padding-left: 21px;
  border-left: 4px solid transparent;
  font-size: 24px;
}

.nav-item.active {
  border-left-color: #3d8fe6;
  color: #b9bdc2;
}

.nav-item.active svg {
  color: #fff;
}

.nav-combo {
  position: relative;
  width: 36px;
  height: 40px;
}

.combo-gear {
  position: absolute;
  right: 0;
  bottom: 0;
  background: #262b34;
  border-radius: 50%;
}

.bandicut {
  margin: auto 27px 37px 25px;
  height: 50px;
  border: 2px solid #5f666f;
  display: flex;
  align-items: center;
  gap: 10px;
  padding-left: 21px;
}

.cut-logo {
  width: 155px;
  font-family: "DejaVu Sans", sans-serif;
  font-weight: 700;
  font-size: 25px;
  letter-spacing: 0.8px;
  white-space: nowrap;
  color: #6a7078;
}

.cut-logo em {
  font-style: normal;
  color: #2e5e92;
}

.content {
  flex: 1;
  background: #343b46;
  padding: 0 39px 0 39px;
}

.tabs {
  height: 95px;
  display: flex;
  align-items: center;
  padding-left: 25px;
  padding-top: 30px;
  border-bottom: 2px solid #535a65;
  color: #70767f;
  font-size: 24px;
}

.tab {
  display: flex;
  align-items: center;
  gap: 13px;
}

.tab.active {
  color: #fff;
}

.tab-sep {
  width: 2px;
  height: 26px;
  margin: 0 44px 0 40px;
  background: #4d545f;
}

.modes {
  margin-top: 41px;
  height: 68px;
  display: flex;
  gap: 2px;
  color: #7e858f;
}

.mode-cell {
  flex: 1;
  background: #3d4753;
  display: flex;
  align-items: center;
  justify-content: center;
}

.mode-cell.on {
  background: #3897f0;
}

.guide {
  padding-left: 31px;
  color: #d4d8dc;
  font-size: 24px;
}

.guide h2 {
  margin: 57px 0 0;
  font-size: 29px;
  line-height: 36px;
  font-weight: 400;
  word-spacing: 4px;
  color: #f2f3f5;
}

.lead {
  margin: 21px 0 0;
  line-height: 40px;
}

.steps {
  margin: 53px 0 0;
  padding: 0;
  list-style: none;
  line-height: 39px;
}

.actions {
  margin-top: 45px;
  display: flex;
  align-items: center;
  gap: 61px;
}

.rec-start {
  width: 209px;
  height: 82px;
  padding: 0 0 0 16px;
  display: flex;
  align-items: center;
  gap: 11px;
  background: #272c35;
  border: 2px solid #4c5562;
  color: #eceef0;
  font-family: inherit;
  font-size: 24px;
}

.rec-label {
  margin-top: -3px;
}

.rec-small {
  width: 54px;
  height: 54px;
  border-radius: 50%;
  background: #e03a2f;
  color: #fff;
  font-family: "Roboto", "Liberation Sans", sans-serif;
  font-size: 18px;
  font-weight: 700;
  line-height: 54px;
  text-align: center;
}

.help-link {
  color: #d8dce0;
  border-bottom: 2px solid #d8dce0;
  line-height: 30px;
}

.hotkeys {
  margin-top: 57px;
  display: flex;
  gap: 60px;
}

.hotkey label {
  height: 30px;
  display: flex;
  align-items: center;
  gap: 13px;
  color: #c9cdd2;
}

.hotkey label svg {
  color: #eceef0;
}

.key-input {
  margin-top: 13px;
  height: 50px;
  padding-left: 10px;
  background: #3d4753;
  line-height: 50px;
  color: #c9cdd2;
}

.first-key {
  width: 359px;
}

.second-key {
  width: 357px;
}

.bc-foot {
  flex: 1;
  display: flex;
  align-items: center;
  justify-content: center;
  gap: 20px;
  padding-right: 10px;
  color: #a4abb3;
  font-size: 24px;
}

.hover-spot {
  position: absolute;
  left: 1067px;
  top: -14px;
  width: 118px;
  height: 118px;
  border-radius: 50%;
  background: rgba(20, 90, 175, 0.55);
}

.cursor {
  position: absolute;
  left: 1127px;
  top: 47px;
}

.hdmi-label {
  font-family: "Liberation Sans", sans-serif;
  font-size: 13px;
  font-weight: 700;
  fill: currentColor;
}

.xl-label {
  font-family: "Liberation Sans", sans-serif;
  font-size: 17px;
  font-weight: 700;
  fill: #fff;
}
</style>
